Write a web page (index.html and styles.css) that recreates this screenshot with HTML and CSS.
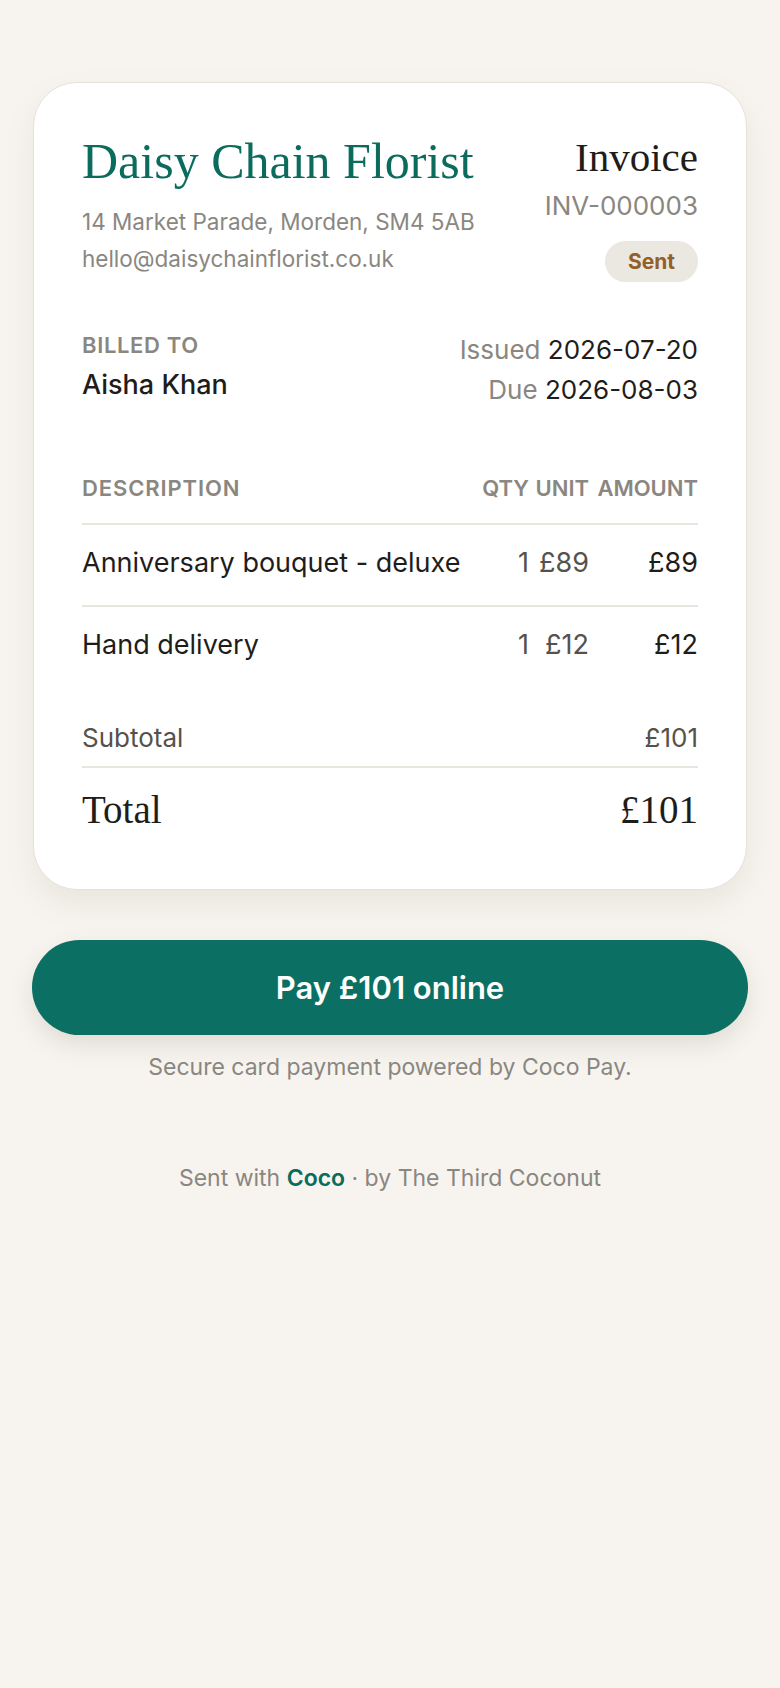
FILE: index.html
```html
<!DOCTYPE html>
<html lang="en">
<head>
  <meta charset="UTF-8">
  <title>Invoice INV-000003 · Daisy Chain Florist</title>
  <link rel="stylesheet" href="styles.css">
</head>
<body>
  <div class="page">
    <div class="card">
      <div class="top">
        <div class="from">
          <h1>Daisy Chain Florist</h1>
          <p class="addr">14 Market Parade, Morden, SM4 5AB</p>
          <p class="addr">hello@daisychainflorist.co.uk</p>
        </div>
        <div class="doc">
          <h2>Invoice</h2>
          <p class="number">INV-000003</p>
          <span class="badge">Sent</span>
        </div>
      </div>

      <div class="meta">
        <div>
          <div class="label">Billed to</div>
          <div class="client">Aisha Khan</div>
        </div>
        <div class="dates">
          <div><span class="muted">Issued</span> 2026-07-20</div>
          <div><span class="muted">Due</span> 2026-08-03</div>
        </div>
      </div>

      <div class="items">
        <div class="row head">
          <span>Description</span>
          <span class="num">Qty</span>
          <span class="num">Unit</span>
          <span class="num">Amount</span>
        </div>
        <div class="row">
          <span>Anniversary bouquet - deluxe</span>
          <span class="num soft">1</span>
          <span class="num soft">£89</span>
          <span class="num">£89</span>
        </div>
        <div class="row">
          <span>Hand delivery</span>
          <span class="num soft">1</span>
          <span class="num soft">£12</span>
          <span class="num">£12</span>
        </div>
      </div>

      <div class="totals">
        <div class="sub">
          <span>Subtotal</span>
          <span>£101</span>
        </div>
        <div class="grand">
          <span>Total</span>
          <span>£101</span>
        </div>
      </div>
    </div>

    <button class="pay">Pay £101 online</button>
    <p class="secure">Secure card payment powered by Coco Pay.</p>

    <p class="footer">Sent with <b>Coco</b> · by The Third Coconut</p>
  </div>
</body>
</html>
```

FILE: styles.css
```css
body {
  margin: 0;
  background: #f7f4ef;
  font-family: Inter, 'Noto Sans', sans-serif;
  color: #1f1d1a;
}

.page {
  padding: 82px 32px 60px;
}

.card {
  margin: 0 1px;
  background: #fff;
  border: 1px solid #e6e2da;
  border-radius: 44px;
  box-shadow: 0 14px 30px rgba(120, 105, 80, 0.10);
  padding: 50px 48px 56px;
}

.top {
  display: flex;
  justify-content: space-between;
  align-items: flex-start;
}

h1 {
  font-family: 'Liberation Serif', serif;
  font-weight: normal;
  font-size: 50px;
  line-height: 56px;
  color: #0b6b5c;
  margin: 0 0 14px;
}

.addr {
  margin: 0;
  font-size: 22.5px;
  line-height: 37px;
  color: #8a8680;
}

.doc {
  display: flex;
  flex-direction: column;
  align-items: flex-end;
}

h2 {
  font-family: 'Liberation Serif', serif;
  font-weight: normal;
  font-size: 41px;
  line-height: 48px;
  margin: 0;
}

.number {
  margin: 8px 0 0;
  font-size: 26px;
  line-height: 34px;
  color: #8a8680;
}

.badge {
  margin-top: 18px;
  background: #ebe8e1;
  color: #93602a;
  font-weight: 700;
  font-size: 21px;
  line-height: 41px;
  padding: 0 23px;
  border-radius: 21px;
}

.meta {
  display: flex;
  justify-content: space-between;
  margin-top: 48px;
}

.label,
.head {
  text-transform: uppercase;
  font-size: 22px;
  font-weight: 600;
  letter-spacing: 0.03em;
  color: #8a8680;
}

.label {
  line-height: 30px;
}

.client {
  margin-top: 5px;
  font-size: 27px;
  font-weight: 500;
  line-height: 40px;
}

.dates {
  text-align: right;
  font-size: 26px;
  line-height: 40px;
}

.muted {
  color: #8a8680;
}

.items {
  margin-top: 63px;
}

.row {
  display: grid;
  grid-template-columns: 1fr 50px 58px 107px;
  column-gap: 2px;
  font-size: 27px;
  line-height: 34px;
  padding: 21px 0 25px;
  border-bottom: 2px solid #e8e5df;
}

.row:last-child {
  border-bottom: none;
}

.row.head {
  font-size: 22px;
  line-height: 30px;
  letter-spacing: 0.04em;
  padding: 0 0 20px;
}

.row.head .num {
  letter-spacing: 0;
}

.num {
  text-align: right;
}

.soft {
  color: #55524c;
}

.totals {
  padding-top: 34px;
}

.sub,
.grand {
  display: flex;
  justify-content: space-between;
}

.sub {
  font-size: 26px;
  line-height: 34px;
  color: #55524c;
  padding-bottom: 11px;
  border-bottom: 2px solid #e8e5df;
}

.grand {
  font-family: 'Liberation Serif', serif;
  font-size: 39px;
  line-height: 46px;
  padding-top: 19px;
}

.pay {
  display: block;
  width: 100%;
  margin-top: 50px;
  height: 95px;
  border: none;
  border-radius: 48px;
  background: #0b7063;
  color: #fff;
  font-family: Inter, 'Noto Sans', sans-serif;
  font-size: 31px;
  font-weight: 600;
  box-shadow: 0 10px 24px rgba(90, 80, 60, 0.14);
  cursor: pointer;
}

.secure {
  text-align: center;
  margin: 16px 0 0;
  font-size: 23px;
  line-height: 32px;
  color: #8a8680;
}

.footer {
  text-align: center;
  margin: 79px 0 0;
  font-size: 23px;
  line-height: 32px;
  color: #8a8680;
}

.footer b {
  color: #0b6b5c;
  font-weight: 600;
}
```
